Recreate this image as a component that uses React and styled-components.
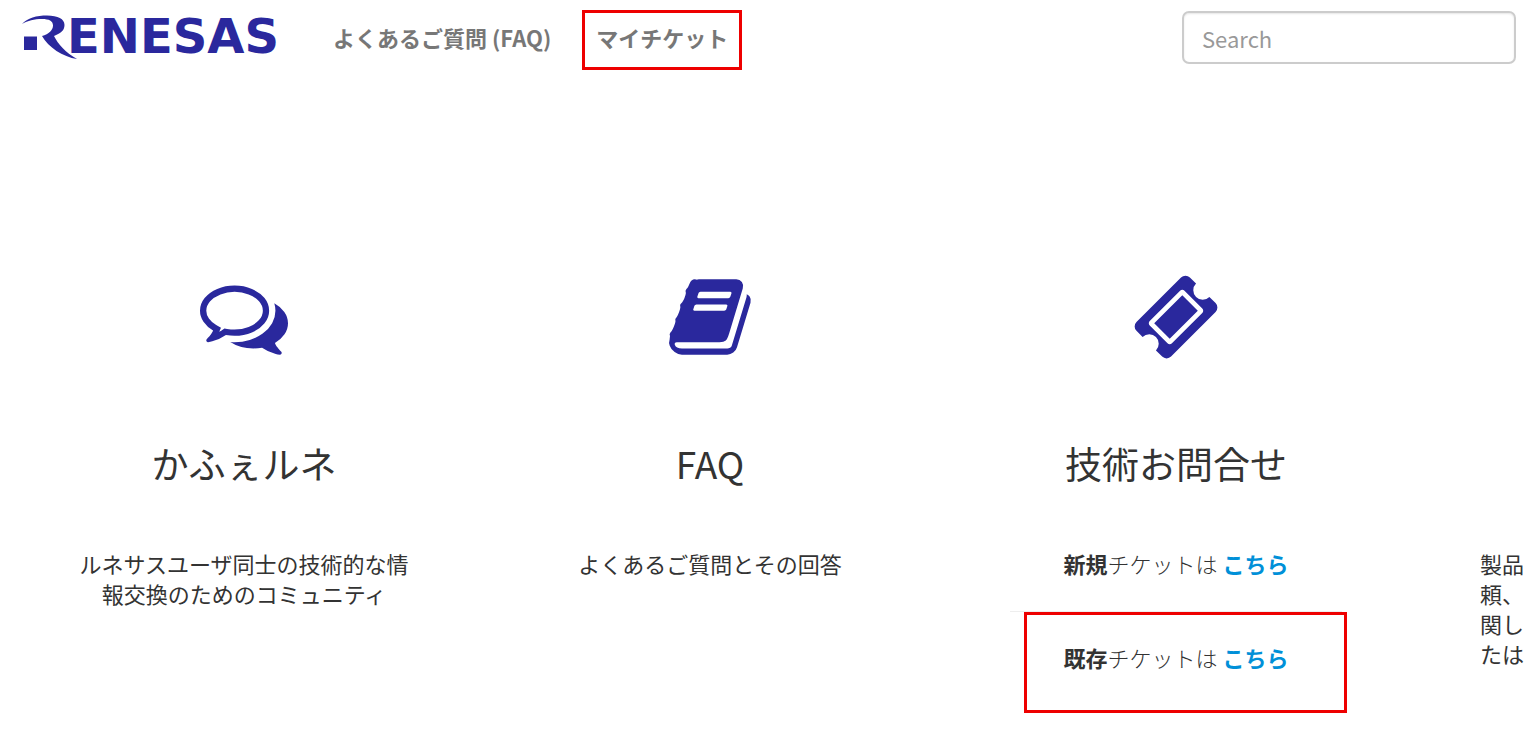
import React from 'react';
import styled, { createGlobalStyle } from 'styled-components';

const GlobalStyle = createGlobalStyle`
  * {
    box-sizing: border-box;
  }
  body {
    margin: 0;
    background: #fff;
    color: #333;
    font-family: "Noto Sans CJK JP", "Noto Sans", sans-serif;
    font-size: 22px;
    line-height: 30px;
  }
`;

const icons = {
  comments: 'M704 384q-153 0-286 52t-211.5 141-78.5 191q0 82 53 158t149 132l97 56-35 84q34-20 62-39l44-31 53 10q78 14 153 14 153 0 286-52t211.5-141 78.5-191-78.5-191-211.5-141-286-52zm0-128q191 0 353.5 68.5t256.5 186.5 94 257-94 257-256.5 186.5-353.5 68.5q-86 0-176-16-124 88-278 128-36 9-86 16h-3q-11 0-20.5-8t-11.5-21q-1-3-1-6.5t.5-6.5 2-6l2.5-5 3.5-5.5 4-5 4.5-5 4-4.5q5-6 23-25t26-29.5 22.5-29 25-38.5 20.5-44q-124-72-195-177t-71-224q0-139 94-257t256.5-186.5 353.5-68.5zm822 1169q10 24 20.5 44t25 38.5 22.5 29 26 29.5 23 25q1 1 4 4.5t4.5 5 4 5 3.5 5.5l2.5 5 2 6 .5 6.5-1 6.5q-3 14-13 22t-22 7q-50-7-86-16-154-40-278-128-90 16-176 16-271 0-472-132 58 4 88 4 161 0 309-45t264-129q125-92 192-212t67-254q0-77-23-152 129 71 204 178t75 230q0 120-71 224.5t-195 176.5z',
  book: 'M1703 478q40 57 18 129l-275 906q-19 64-76.5 107.5t-122.5 43.5h-923q-77 0-148.5-53.5t-99.5-131.5q-24-67-2-127 0-4 3-27t4-37q1-8-3-21.5t-3-19.5q2-11 8-21t16.5-23.5 16.5-23.5q23-38 45-91.5t30-91.5q3-10 .5-30t-.5-28q3-11 17-28t17-23q21-36 42-92t25-90q1-9-2.5-32t.5-28q4-13 22-30.5t22-22.5q19-26 42.5-84.5t27.5-96.5q1-8-3-25.5t-2-26.5q2-8 9-18t18-23 17-21q8-12 16.5-30.5t15-35 16-36 19.5-32 26.5-23.5 36-11.5 47.5 5.5l-1 3q38-9 51-9h761q74 0 114 56t18 130l-274 906q-36 119-71.5 153.5t-128.5 34.5h-869q-27 0-38 15-11 16-1 43 24 70 144 70h923q29 0 56-15.5t35-41.5l300-987q7-22 5-57 38 15 59 43zm-1064 2q-4 13 2 22.5t20 9.5h608q13 0 25.5-9.5t16.5-22.5l21-64q4-13-2-22.5t-20-9.5h-608q-13 0-25.5 9.5t-16.5 22.5zm-83 256q-4 13 2 22.5t20 9.5h608q13 0 25.5-9.5t16.5-22.5l21-64q4-13-2-22.5t-20-9.5h-608q-13 0-25.5 9.5t-16.5 22.5z',
  ticket: 'M1024 452l316 316-572 572-316-316zm-211 979l618-618q19-19 19-45t-19-45l-362-362q-18-18-45-18t-45 18l-618 618q-19 19-19 45t19 45l362 362q18 18 45 18t45-18zm889-637l-907 908q-37 37-90.5 37t-90.5-37l-126-126q56-56 56-136t-56-136-136-56-136 56l-125-126q-37-37-37-90.5t37-90.5l907-906q37-37 90.5-37t90.5 37l125 125q-56 56-56 136t56 136 136 56 136-56l126 125q37 37 37 90.5t-37 90.5z',
};

function Icon({ name }) {
  return (
    <IconSvg viewBox="0 0 1792 1792" aria-hidden="true">
      <path d={icons[name]} />
    </IconSvg>
  );
}

function Logo() {
  return (
    <LogoLink href="/" aria-label="RENESAS">
      <svg width="270" height="46" viewBox="22 15 270 46" aria-hidden="true">
        <path d="M24 36.500H37V50H24Z" />
        <path d="M22 24C27 18 37 15.500 47 15.500C58 15.500 64.500 19 64.500 25C64.500 31 60 33.500 54 36C58 44 66 53 77 59C63 57 48 47 42 36C49 34 53 30 53 25.500C53 21 49 19 42 19C34 19 28 20.500 22 24Z" />
        <LogoText x="67" y="53">ENESAS</LogoText>
      </svg>
    </LogoLink>
  );
}

export default function App() {
  return (
    <>
      <GlobalStyle />
      <Header>
        <Logo />
        <Nav>
          <NavLink href="#faq">よくあるご質問 (FAQ)</NavLink>
          <NavLink href="#tickets" $marked>マイチケット</NavLink>
        </Nav>
        <SearchInput type="search" placeholder="Search" aria-label="Search" />
      </Header>
      <Columns>
        <Column>
          <Icon name="comments" />
          <Title>かふぇルネ</Title>
          <Text>ルネサスユーザ同士の技術的な情報交換のためのコミュニティ</Text>
        </Column>
        <Column>
          <Icon name="book" />
          <Title>FAQ</Title>
          <Text>よくあるご質問とその回答</Text>
        </Column>
        <Column>
          <Icon name="ticket" />
          <Title>技術お問合せ</Title>
          <Text>
            <strong>新規</strong><Light>チケットは </Light><TicketLink href="#new">こちら</TicketLink>
          </Text>
          <MarkedRow>
            <strong>既存</strong><Light>チケットは </Light><TicketLink href="#existing">こちら</TicketLink>
          </MarkedRow>
        </Column>
        <SideColumn>
          <Text>
            製品<br />頼、<br />関し<br />たは
          </Text>
        </SideColumn>
      </Columns>
    </>
  );
}

const Header = styled.header`
  display: flex;
  align-items: flex-start;
  padding: 10px 8px 0 22px;
`;

const LogoLink = styled.a`
  display: block;
  margin-top: 5px;
  svg {
    display: block;
    fill: #2a289d;
    overflow: visible;
  }
`;

const LogoText = styled.text`
  font-family: "DejaVu Sans", sans-serif;
  font-size: 48px;
  font-weight: bold;
`;

const Nav = styled.nav`
  display: flex;
  gap: 17px;
  margin-left: 27px;
`;

const NavLink = styled.a`
  display: block;
  height: 60px;
  padding: 9px 11px;
  border: 3px solid ${props => (props.$marked ? '#ee0000' : 'transparent')};
  color: #777;
  font-weight: bold;
  text-decoration: none;
  white-space: nowrap;
`;

const SearchInput = styled.input`
  width: 334px;
  height: 53px;
  margin: 1px 0 0 auto;
  padding: 0 18px;
  border: 2px solid #ccc;
  border-radius: 7px;
  box-shadow: inset 0 1px 2px rgba(0, 0, 0, 0.1);
  background: #fff;
  color: #555;
  font: inherit;
  appearance: none;
  &::placeholder {
    color: #999;
  }
`;

const Columns = styled.main`
  display: grid;
  grid-template-columns: repeat(4, minmax(466px, 1fr));
  padding: 203px 0 20px 11px;
  overflow: hidden;
`;

const Column = styled.section`
  padding: 0 67px;
  text-align: center;
`;

const SideColumn = styled(Column)`
  padding: 275px 0 0 71px;
  text-align: left;
`;

const IconSvg = styled.svg`
  display: block;
  width: 88px;
  height: 88px;
  margin: 0 auto;
  fill: #2a289d;
`;

const Title = styled.h2`
  margin: 77px 0 60px;
  font-size: 37px;
  font-weight: normal;
  line-height: 50px;
`;

const Text = styled.p`
  margin: 0;
`;

const Light = styled.span`
  font-weight: 300;
`;

const TicketLink = styled.a`
  color: #0090d8;
  font-weight: bold;
  text-decoration: none;
`;

const MarkedRow = styled(Text)`
  position: relative;
  margin-top: 33px;
  padding: 30px 0 41px;
  border-top: 1px solid #eee;
  &::after {
    content: "";
    position: absolute;
    inset: 0 -5px 0 14px;
    border: 3px solid #ee0000;
    pointer-events: none;
  }
`;
